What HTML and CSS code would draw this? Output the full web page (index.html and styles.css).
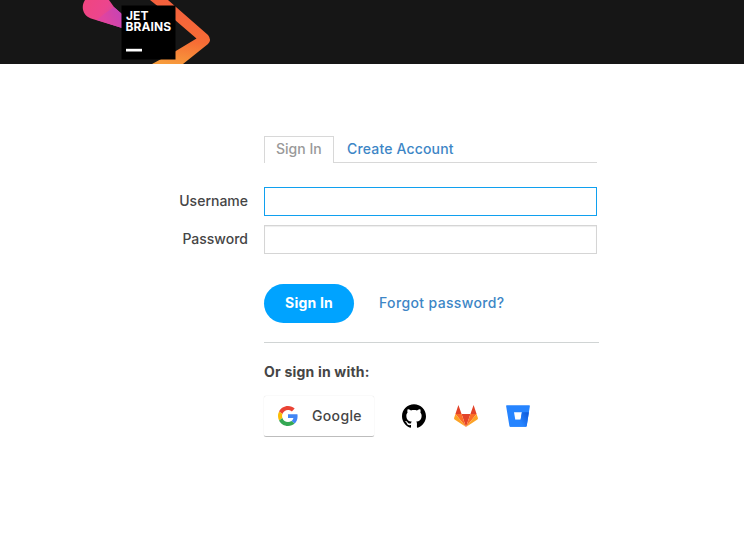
FILE: index.html
```
<!DOCTYPE html>
<html lang="en">
<head>
<meta charset="utf-8">
<title>Sign In</title>
<link rel="stylesheet" href="styles.css">
</head>
<body>
<header class="header">
  <svg class="logo" width="130" height="64" viewBox="82 0 130 64" role="img" aria-label="JetBrains">
    <defs>
      <linearGradient id="pink" x1="85" y1="0" x2="121" y2="20" gradientUnits="userSpaceOnUse"><stop offset="0" stop-color="#f04580"/><stop offset=".5" stop-color="#ec458d"/><stop offset="1" stop-color="#cf47a8"/></linearGradient>
      <linearGradient id="purple" x1="104" y1="20" x2="122" y2="12" gradientUnits="userSpaceOnUse"><stop offset="0" stop-color="#e044a0"/><stop offset="1" stop-color="#c544b5"/></linearGradient>
      <linearGradient id="orange" x1="180" y1="0" x2="170" y2="64" gradientUnits="userSpaceOnUse"><stop offset="0" stop-color="#f45f3e"/><stop offset=".6" stop-color="#f66c35"/><stop offset="1" stop-color="#f79b3c"/></linearGradient>
    </defs>
    <path fill="url(#pink)" d="M85 0H122L114 7L122 14V28L91 18.500C82 15 81 6 85 0Z"/>
    <path fill="#161616" d="M109 0H122V14L114 7Z"/>
    <path fill="url(#purple)" d="M104 14L114 7L122 14V28L97 20Z"/>
    <path fill="url(#orange)" d="M150 0H168L208 35Q212 40 208 44L183 64H152L175 51.500L196.500 38.500L175 20Z"/>
    <path d="M121.500 5.500h54v54h-54z"/>
    <path fill="#fff" d="M126 48.800h16v2.700h-16z"/>
    <text class="logo-text"><tspan x="126" y="19.500">JET</tspan><tspan x="125.500" y="31">BRAINS</tspan></text>
  </svg>
</header>
<main class="login">
  <nav class="tabs">
    <a class="tab tab-active">Sign In</a>
    <a class="tab t-create">Create Account</a>
  </nav>
  <form class="form">
    <label class="label" for="username">Username</label>
    <input class="input input-focus" id="username" type="text">
    <label class="label" for="password">Password</label>
    <input class="input" id="password" type="password">
  </form>
  <div class="actions">
    <button class="submit" type="button">Sign In</button>
    <a class="forgot">Forgot password?</a>
  </div>
  <section class="social">
    <h2 class="social-title">Or sign in with:</h2>
    <div class="providers">
      <a class="google">
        <svg width="20" height="20" viewBox="0 0 48 48"><path fill="#ea4335" d="M24 9.500c3.540 0 6.710 1.220 9.210 3.600l6.850-6.850C35.900 2.380 30.470 0 24 0 14.620 0 6.510 5.380 2.560 13.220l7.980 6.190C12.430 13.720 17.740 9.500 24 9.500z"/><path fill="#4285f4" d="M46.980 24.550c0-1.570-.15-3.090-.38-4.550H24v9.020h12.940c-.58 2.960-2.260 5.480-4.780 7.180l7.730 6c4.510-4.180 7.090-10.360 7.090-17.650z"/><path fill="#fbbc05" d="M10.530 28.590A14.500 14.500 0 0 1 9.770 24c0-1.600.27-3.140.76-4.590l-7.980-6.190A24 24 0 0 0 0 24c0 3.880.92 7.540 2.560 10.780l7.970-6.190z"/><path fill="#34a853" d="M24 48c6.480 0 11.930-2.130 15.890-5.810l-7.730-6C30 37.640 27.240 38.490 24 38.490c-6.260 0-11.570-4.220-13.470-9.910l-7.980 6.190C6.510 42.620 14.620 48 24 48z"/></svg>
        <span class="t-google">Google</span>
      </a>
      <a class="provider" aria-label="GitHub">
        <svg width="24" height="24" viewBox="0 0 24 24"><path d="M12 .297c-6.630 0-12 5.373-12 12 0 5.303 3.438 9.800 8.205 11.385.6.113.82-.258.82-.577 0-.285-.01-1.040-.015-2.040-3.338.724-4.042-1.610-4.042-1.610C4.422 18.070 3.633 17.700 3.633 17.700c-1.087-.744.084-.729.084-.729 1.205.084 1.838 1.236 1.838 1.236 1.070 1.835 2.809 1.305 3.495.998.108-.776.417-1.305.760-1.605-2.665-.3-5.466-1.332-5.466-5.930 0-1.310.465-2.380 1.235-3.220-.135-.303-.54-1.523.105-3.176 0 0 1.005-.322 3.300 1.230.960-.267 1.980-.399 3-.405 1.020.006 2.040.138 3 .405 2.280-1.552 3.285-1.230 3.285-1.230.645 1.653.240 2.873.120 3.176.765.840 1.230 1.910 1.230 3.220 0 4.610-2.805 5.625-5.475 5.920.420.360.810 1.096.810 2.220 0 1.606-.015 2.896-.015 3.286 0 .315.210.690.825.570C20.565 22.092 24 17.592 24 12.297c0-6.627-5.373-12-12-12"/></svg>
      </a>
      <a class="provider" aria-label="GitLab">
        <svg width="24" height="24" viewBox="0 0 24 24"><path fill="#e24329" d="M12 23L16.400 10H7.600zM4.400 1L1.400 10h6.200zM19.600 1l-3.200 9h6.200z"/><path fill="#fc6d26" d="M12 23L7.600 10H1.400zM12 23l4.400-13h6.200z"/><path fill="#fca326" d="M1.400 10L.1 14.100q-.2.800.500 1.400L12 23zM22.600 10l1.300 4.100q.2.800-.5 1.400L12 23z"/></svg>
      </a>
      <a class="provider" aria-label="Bitbucket">
        <svg width="24" height="24" viewBox="0 0 24 24"><defs><linearGradient id="bb" x1="23" y1="9" x2="13" y2="17" gradientUnits="userSpaceOnUse"><stop offset=".1" stop-color="#0f5bdc"/><stop offset="1" stop-color="#2684ff"/></linearGradient></defs><path fill="#2684ff" fill-rule="evenodd" d="M.8 1.200h22.400q.8 0 .7.900l-3.200 20q-.1.700-.9.700H4.300q-.8 0-.9-.8L.1 2.100Q0 1.200.8 1.200zM8 8.300l1.300 7.400h5.300l1.300-7.400z"/><path fill="url(#bb)" d="M22.900 8.300h-7l-1.300 7.400H9.300L3.700 22.500q.3.300.7.300h15.500q.7 0 .8-.7z"/></svg>
      </a>
    </div>
  </section>
</main>
</body>
</html>
```
FILE: styles.css
```
* { box-sizing: border-box; }
body {
  margin: 0;
  background: #fff;
  color: #454545;
  font: 450 14px/20px Inter, "Liberation Sans", sans-serif;
}
.header { height: 64px; padding-left: 82px; background: #161616; }
.logo { display: block; }
.logo-text { fill: #fff; font: 700 12px Inter, sans-serif; letter-spacing: .1px; }
.login { width: 335px; margin: 72px 0 0 264px; }
.tabs { display: flex; width: 333px; height: 27px; border-bottom: 1px solid #d8d8d8; }
.tab { height: 26px; padding: 3px 0 0 13px; color: #3d86c6; }
.t-create { letter-spacing: .17px; }
.tab-active {
  width: 70px;
  height: 27px;
  padding: 2px 0 0 11px;
  border: 1px solid #d8d8d8;
  border-bottom: 0;
  background: #fff;
  color: #999;
}
.form {
  display: grid;
  grid-template-columns: 84px 333px;
  grid-auto-rows: 29px;
  row-gap: 9px;
  margin: 24px 0 0 -84px;
}
.label { padding: 4px 0 0; margin-right: 16px; justify-self: end; white-space: nowrap; }
.input {
  width: 333px;
  height: 29px;
  border: 1px solid #d5d5d5;
  background: #fff;
  box-shadow: inset 0 1px 1px #eee;
  outline: 0;
}
.input-focus { border-color: #10a0ef; box-shadow: none; }
.actions {
  display: flex;
  align-items: center;
  gap: 25px;
  height: 59px;
  margin-top: 30px;
  padding-bottom: 19px;
  border-bottom: 1px solid #d0d4d4;
}
.submit {
  width: 90px;
  height: 39px;
  padding: 0 0 1px;
  border: 0;
  border-radius: 20px;
  background: #00a3ff;
  color: #fff;
  font: 700 14px/20px Inter, sans-serif;
  letter-spacing: .2px;
}
.forgot { padding-bottom: 1px; color: #3d86c6; letter-spacing: .36px; white-space: nowrap; }
.social-title { margin: 19px 0 14px; font-size: 14px; line-height: 20px; font-weight: 700; letter-spacing: .2px; }
.providers { display: flex; align-items: center; gap: 28px; }
.google {
  display: flex;
  align-items: center;
  gap: 14px;
  width: 110px;
  height: 41px;
  padding-left: 14px;
  border-bottom: 1px solid #bdbdbd;
  border-radius: 2px;
  box-shadow: 0 0 1px rgba(0, 0, 0, .2);
}
.t-google { padding-bottom: 1px; letter-spacing: .35px; }
.provider { width: 24px; height: 24px; margin-bottom: 2px; }
.provider svg, .google svg { display: block; }
```
